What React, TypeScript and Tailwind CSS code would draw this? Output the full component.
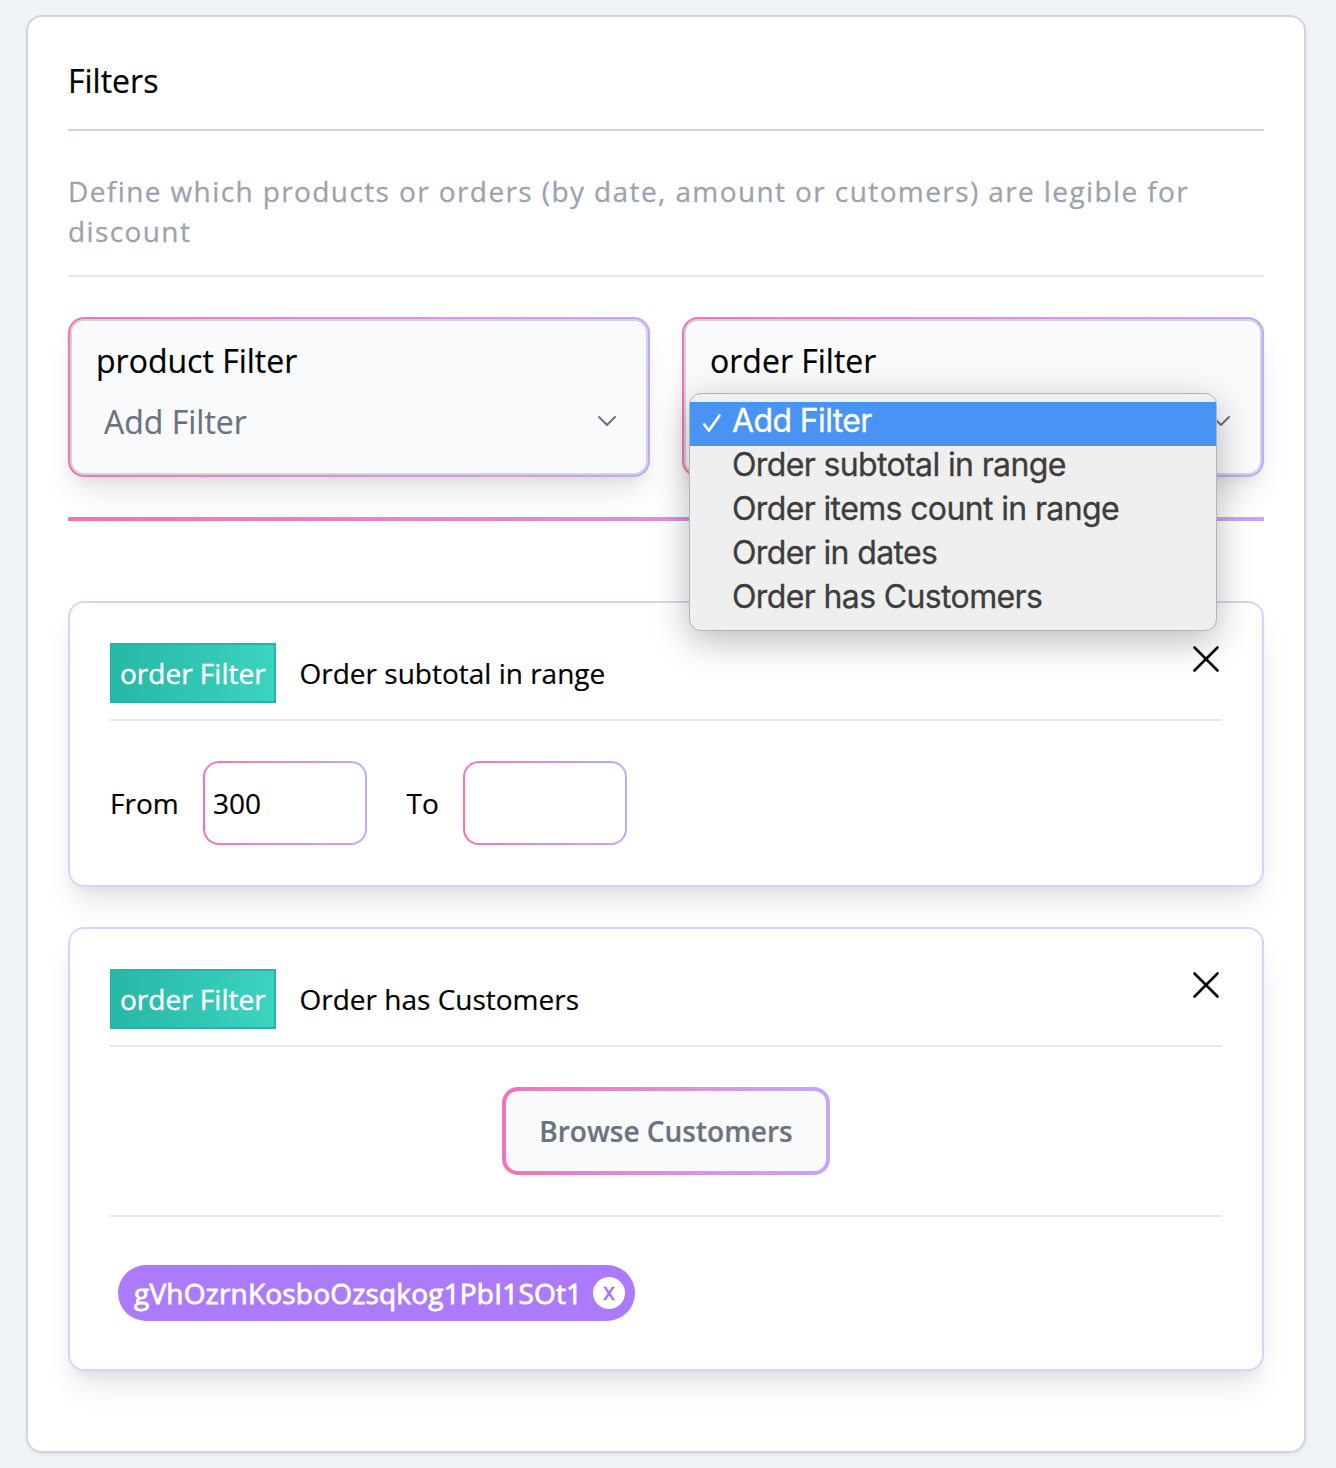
import React from "react";

const options = [
  "Add Filter",
  "Order subtotal in range",
  "Order items count in range",
  "Order in dates",
  "Order has Customers",
];

const cardShadow =
  "shadow-[0_20px_30px_-6px_rgba(0,0,0,0.1),0_8px_12px_-4px_rgba(0,0,0,0.05)]";

function Chevron() {
  return (
    <svg className="-mt-0.5 -mr-[3px] ml-auto h-3 w-5" viewBox="0 0 20 12" fill="none" stroke="#6b7280" strokeWidth="2" strokeLinecap="round" strokeLinejoin="round">
      <path d="M2 2l8 8 8-8" />
    </svg>
  );
}

function CloseIcon() {
  return (
    <svg className="size-8" viewBox="0 0 32 32" fill="none" stroke="#000" strokeWidth="2.6" strokeLinecap="round">
      <path d="M4.5 4.5l23 23M27.5 4.5l-23 23" />
    </svg>
  );
}

function FilterSelect({ title, children }: { title: string; children?: React.ReactNode }) {
  return (
    <div className={`relative h-40 rounded-2xl bg-linear-to-r from-[#f472b6] to-[#c4a6fb] p-0.5 ${cardShadow}`}>
      <div className="h-full rounded-[14px] border-2 border-[#d1d5db] bg-[#f9fafc] px-6 pt-4">
        <h3 className="text-[32px] leading-[48px] [-webkit-text-stroke:0.2px]">{title}</h3>
        <div className="mt-3 flex h-[50px] items-center px-2 text-[32px] leading-[50px] text-[#6b7280] [-webkit-text-stroke:0.2px]">
          {!children && <span>Add Filter</span>}
          <Chevron />
        </div>
      </div>
      {children}
    </div>
  );
}

function OptionMenu() {
  return (
    <div className="absolute top-[76px] left-[7px] z-10 h-[238px] w-[528px] rounded-xl border border-[#b4b4b6] bg-[#efefef] py-2 font-['Inter',sans-serif] text-[32px] text-[#3d3d3d] shadow-[0_10px_36px_rgba(0,0,0,0.27)]">
      {options.map((label, i) => (
        <div
          key={label}
          className={
            i === 0
              ? "flex h-11 items-center bg-[#4993f5] leading-[44px] text-white"
              : "flex h-11 items-center leading-[44px]"
          }
        >
          <span className="flex w-[43px] justify-center">
            {i === 0 && (
              <svg className="-mt-0.5 size-5" viewBox="0 0 20 20" fill="none" stroke="#fff" strokeWidth="2.7" strokeLinecap="round" strokeLinejoin="round">
                <path d="M2.2 11.5L7 17.5 17.5 2.5" />
              </svg>
            )}
          </span>
          <span className="-mt-[7px] -ml-px tracking-[-0.63px] [-webkit-text-stroke:0.3px]">{label}</span>
        </div>
      ))}
    </div>
  );
}

function FilterCard({ name, className, children }: { name: string; className: string; children: React.ReactNode }) {
  return (
    <section className={`rounded-2xl border-2 border-[#ddd0fe] bg-white p-10 ${cardShadow} ${className}`}>
      <header className="flex h-[78px] items-start justify-between border-b-2 border-[#e5e7eb]">
        <div className="flex items-center text-[28px] [-webkit-text-stroke:0.2px]">
          <span className="flex h-[60px] w-[166px] items-center border-2 border-[#26b5a5] bg-linear-to-r from-[#27b7a7] to-[#3bd4c0] pl-2 whitespace-nowrap text-white [-webkit-text-stroke:0.4px]">
            order Filter
          </span>
          <h4 className="ml-[23.5px]">{name}</h4>
        </div>
        <CloseIcon />
      </header>
      {children}
    </section>
  );
}

function RangeInput({ value }: { value: string }) {
  return (
    <div className="h-[84px] w-[164px] rounded-2xl bg-linear-to-r from-[#f472b6] to-[#c4a6fb] p-0.5">
      <input className="size-full rounded-[14px] bg-white px-2 outline-none" defaultValue={value} />
    </div>
  );
}

export default function App() {
  return (
    <main className="h-[1468px] w-[1336px] overflow-hidden bg-[#f0f4f9] pt-[15px] pl-[26px] font-['Open_Sans',sans-serif] text-black">
      <div className="h-[1438px] w-[1280px] rounded-2xl border-2 border-[#d1d5db] bg-white px-10 shadow-[0_2px_4px_rgba(0,0,0,0.06)]">
        <h2 className="h-[114px] border-b-2 border-[#d1d5db] pt-10 text-[32px] leading-[48px] [-webkit-text-stroke:0.2px]">Filters</h2>
        <p className="mt-10 h-[106px] border-b-2 border-[#e5e7eb] text-[28px] leading-10 tracking-[1.4px] text-[#9ca3af] [-webkit-text-stroke:0.3px]">
          Define which products or orders (by date, amount or cutomers) are legible for discount
        </p>
        <div className="mt-10 grid grid-cols-2 gap-8">
          <FilterSelect title="product Filter" />
          <FilterSelect title="order Filter">
            <OptionMenu />
          </FilterSelect>
        </div>
        <div className="mt-10 h-1 bg-linear-to-r from-[#f472b6] to-[#c4a6fb]" />

        <FilterCard name="Order subtotal in range" className="mt-20 h-[286px]">
          <div className="mt-10 flex items-center text-[28px] [-webkit-text-stroke:0.2px]">
            <span className="w-[93px]">From</span>
            <RangeInput value="300" />
            <span className="ml-[39.5px] w-[56.5px]">To</span>
            <RangeInput value="" />
          </div>
        </FilterCard>

        <FilterCard name="Order has Customers" className="mt-10 h-[444px]">
          <div className="flex h-[170px] justify-center border-b-2 border-[#e5e7eb] pt-10">
            <button className="h-[88px] w-[328px] rounded-2xl bg-linear-to-r from-[#f472b6] to-[#c4a6fb] p-1">
              <span className="flex size-full items-center justify-center rounded-xl bg-[#f9fafc] text-[28px] font-semibold text-[#6b7280] [-webkit-text-stroke:0.2px]">
                Browse Customers
              </span>
            </button>
          </div>
          <div className="mt-12 ml-2 flex h-14 w-[517px] items-center justify-between rounded-full bg-[#ac7afd] pr-2.5 pl-4 text-[28px] text-white">
            <span className="tracking-[0.19px] [-webkit-text-stroke:0.8px]">gVhOzrnKosboOzsqkog1PbI1SOt1</span>
            <span className="flex size-8 items-center justify-center rounded-full bg-white pb-1 text-[23px] leading-7 text-[#a873f7] [-webkit-text-stroke:0.5px]">
              x
            </span>
          </div>
        </FilterCard>
      </div>
    </main>
  );
}
